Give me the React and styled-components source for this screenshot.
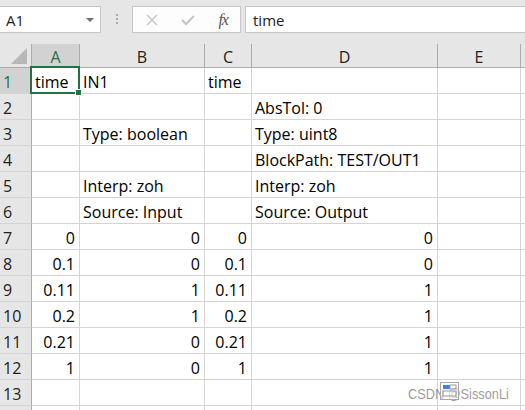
import styled, { createGlobalStyle } from 'styled-components';

const GREEN = '#217346';
const GRID = '#d4d4d4';
const HEAD_BG = '#e6e6e6';
const HEAD_SEL = '#d2d2d2';
const HEAD_LINE = '#ababab';
const FONT = '"Open Sans", "Noto Sans", sans-serif';

const COLS = [48, 125, 47, 186, 83, 16];
const LETTERS = ['A', 'B', 'C', 'D', 'E', ''];

const ROWS = [
  [{ t: 'time' }, { t: 'IN1' }, { t: 'time' }, { t: '' }],
  [{}, {}, {}, { t: 'AbsTol: 0' }],
  [{}, { t: 'Type: boolean' }, {}, { t: 'Type: uint8' }],
  [{}, {}, {}, { t: 'BlockPath: TEST/OUT1' }],
  [{}, { t: 'Interp: zoh' }, {}, { t: 'Interp: zoh' }],
  [{}, { t: 'Source: Input' }, {}, { t: 'Source: Output' }],
  ['0', '0', '0', '0'],
  ['0.1', '0', '0.1', '0'],
  ['0.11', '1', '0.11', '1'],
  ['0.2', '1', '0.2', '1'],
  ['0.21', '0', '0.21', '1'],
  ['1', '0', '1', '1'],
  [{}, {}, {}, {}],
  [{}, {}, {}, {}],
];

const GlobalStyle = createGlobalStyle`
  html, body {
    margin: 0;
    padding: 0;
    background: #ffffff;
    overflow: hidden;
  }
  body {
    font-family: ${FONT};
  }
`;

const Window = styled.div`
  width: 525px;
  height: 410px;
  position: relative;
  overflow: hidden;
  background: #ffffff;
`;

const FormulaBar = styled.div`
  height: 44px;
  background: ${HEAD_BG};
  display: flex;
  align-items: flex-start;
  padding-top: 6px;
  box-sizing: border-box;
`;

const NameBox = styled.div`
  width: 101px;
  height: 27px;
  box-sizing: border-box;
  background: #ffffff;
  border: 1px solid #c6c6c6;
  border-left: none;
  display: flex;
  align-items: center;
  justify-content: space-between;
  padding: 0 6px 0 6px;
  font-size: 15px;
  color: #222;
`;

const Caret = styled.span`
  width: 0;
  height: 0;
  border-left: 4px solid transparent;
  border-right: 4px solid transparent;
  border-top: 4px solid #6d6d6d;
  margin-top: 1px;
`;

const Dots = styled.div`
  width: 31px;
  display: flex;
  flex-direction: column;
  align-items: center;
  gap: 2px;
  padding-top: 8px;
  span {
    width: 2px;
    height: 2px;
    background: #a9a9a9;
  }
`;

const ButtonBox = styled.div`
  width: 109px;
  height: 27px;
  box-sizing: border-box;
  background: #fdfdfd;
  border: 1px solid #c6c6c6;
  display: flex;
  align-items: center;
`;

const BarButton = styled.div`
  width: ${(p) => p.$w}px;
  display: flex;
  align-items: center;
  justify-content: center;
`;

const Fx = styled.span`
  font-family: "Liberation Serif", serif;
  font-style: italic;
  font-size: 16px;
  color: #555;
  letter-spacing: -1px;
`;

const FormulaInput = styled.div`
  flex: 1;
  margin-left: 4px;
  height: 27px;
  box-sizing: border-box;
  background: #ffffff;
  border: 1px solid #c6c6c6;
  border-right: none;
  display: flex;
  align-items: center;
  padding-left: 7px;
  font-size: 15px;
  color: #222;
`;

const Sheet = styled.div`
  display: grid;
  grid-template-columns: 32px ${COLS.map((c) => `${c}px`).join(' ')};
  grid-auto-rows: 26px;
  grid-template-rows: 24px;
`;

const Corner = styled.div`
  background: ${HEAD_BG};
  border-right: 1px solid ${HEAD_LINE};
  border-bottom: 1px solid ${HEAD_LINE};
  display: flex;
  align-items: flex-end;
  justify-content: flex-end;
  padding: 0 4px 3px 0;
  box-sizing: border-box;
`;

const Triangle = styled.span`
  width: 0;
  height: 0;
  border-left: 16px solid transparent;
  border-bottom: 16px solid #b7b7b7;
`;

const ColHead = styled.div`
  background: ${(p) => (p.$sel ? HEAD_SEL : HEAD_BG)};
  color: ${(p) => (p.$sel ? GREEN : '#222')};
  border-right: 1px solid ${HEAD_LINE};
  border-bottom: 1px solid ${(p) => (p.$sel ? GREEN : HEAD_LINE)};
  box-sizing: border-box;
  display: flex;
  align-items: center;
  justify-content: center;
  font-size: 16px;
  padding-top: 3px;
`;

const RowHead = styled.div`
  background: ${(p) => (p.$sel ? HEAD_SEL : HEAD_BG)};
  color: ${(p) => (p.$sel ? GREEN : '#222')};
  border-right: 1px solid ${(p) => (p.$sel ? GREEN : HEAD_LINE)};
  border-bottom: 1px solid ${GRID};
  box-sizing: border-box;
  display: flex;
  align-items: center;
  padding: 2px 0 0 3px;
  font-size: 16px;
`;

const Cell = styled.div`
  position: relative;
  border-right: 1px solid ${GRID};
  border-bottom: 1px solid ${GRID};
  box-sizing: border-box;
  display: flex;
  align-items: center;
  justify-content: ${(p) => (p.$num ? 'flex-end' : 'flex-start')};
  padding: 2px 4px 0 3px;
  font-size: 16px;
  color: #000;
  white-space: nowrap;
  overflow: visible;
  z-index: ${(p) => (p.$sel ? 2 : 1)};
`;

const Selection = styled.div`
  position: absolute;
  left: -2px;
  top: -2px;
  right: -1px;
  bottom: -1px;
  border: 2px solid ${GREEN};
  pointer-events: none;
`;

const Handle = styled.div`
  position: absolute;
  right: -4px;
  bottom: -4px;
  width: 5px;
  height: 5px;
  background: ${GREEN};
  border: 1px solid #fff;
`;

const Watermark = styled.div`
  position: absolute;
  left: 408px;
  top: 385px;
  font-family: "Liberation Sans", Arial, sans-serif;
  font-size: 15px;
  line-height: 17px;
  color: rgba(120, 120, 120, 0.75);
  transform: scaleX(0.85);
  transform-origin: left center;
  white-space: nowrap;
  z-index: 3;
`;

const PasteIcon = styled.div`
  position: absolute;
  left: 440px;
  top: 382px;
  width: 19px;
  height: 18px;
  box-sizing: border-box;
  border: 1px solid #a8a8a8;
  background: rgba(255, 255, 255, 0.5);
  z-index: 4;
`;

function cellValue(v) {
  if (typeof v === 'string') return { t: v, num: true };
  return { t: v.t || '', num: false };
}

export default function App() {
  return (
    <Window>
      <GlobalStyle />
      <FormulaBar>
        <NameBox>
          A1
          <Caret />
        </NameBox>
        <Dots>
          <span />
          <span />
          <span />
        </Dots>
        <ButtonBox>
          <BarButton $w={38}>
            <svg width="12" height="12" viewBox="0 0 12 12">
              <path d="M1 1 L11 11 M11 1 L1 11" stroke="#c4c4c4" strokeWidth="1.4" />
            </svg>
          </BarButton>
          <BarButton $w={36}>
            <svg width="14" height="12" viewBox="0 0 14 12">
              <path d="M1 6 L5 10 L13 2" stroke="#c4c4c4" strokeWidth="2" fill="none" />
            </svg>
          </BarButton>
          <BarButton $w={34}>
            <Fx>fx</Fx>
          </BarButton>
        </ButtonBox>
        <FormulaInput>time</FormulaInput>
      </FormulaBar>
      <Sheet>
        <Corner>
          <Triangle />
        </Corner>
        {LETTERS.map((l, i) => (
          <ColHead key={i} $sel={i === 0}>
            {l}
          </ColHead>
        ))}
        {ROWS.map((row, r) => [
          <RowHead key={`h${r}`} $sel={r === 0}>
            {r < 13 ? r + 1 : ''}
          </RowHead>,
          ...row.map((v, c) => {
            const { t, num } = cellValue(v);
            const sel = r === 0 && c === 0;
            return (
              <Cell key={`${r}-${c}`} $num={num} $sel={sel}>
                {t}
                {sel && (
                  <Selection>
                    <Handle />
                  </Selection>
                )}
              </Cell>
            );
          }),
          <Cell key={`${r}-e`} />,
          <Cell key={`${r}-f`} />,
        ])}
      </Sheet>
      <PasteIcon>
        <svg width="17" height="16" viewBox="0 0 17 16" style={{ display: 'block' }}>
          <rect x="2" y="2" width="7" height="4" fill="#3b82f6" />
          <rect x="9" y="2" width="6" height="4" fill="none" stroke="#999" strokeWidth="1" />
          <rect x="2" y="8" width="13" height="5" fill="none" stroke="#999" strokeWidth="1" />
        </svg>
      </PasteIcon>
      <Watermark>CSDN @SissonLi</Watermark>
    </Window>
  );
}
